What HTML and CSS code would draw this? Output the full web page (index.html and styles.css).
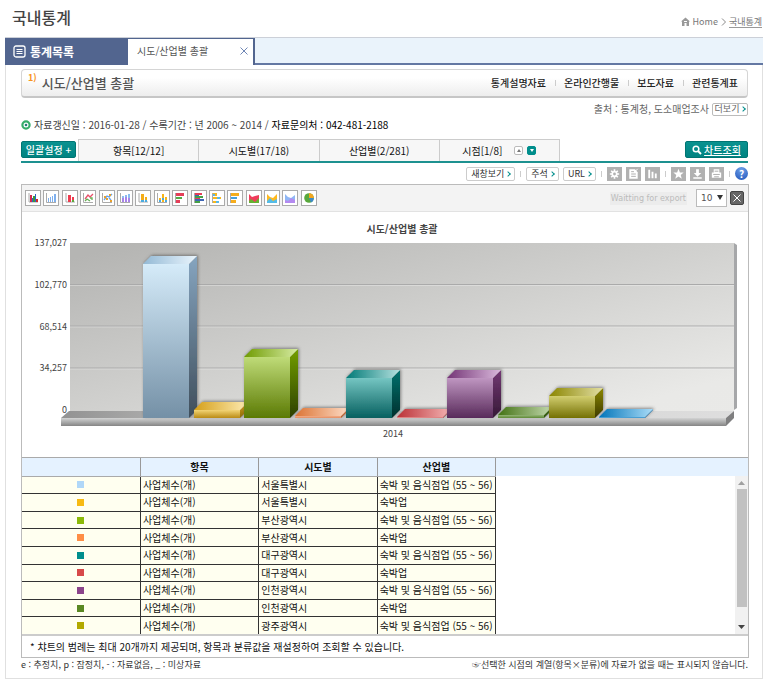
FILE: index.html
```html
<!DOCTYPE html>
<html lang="ko">
<head>
    <meta charset="UTF-8">
    <meta name="viewport" content="width=device-width, initial-scale=1.0">
    <title>국내통계</title>
    <link rel="stylesheet" href="styles.css">
</head>
<body>
    <header class="page-head">
        <h1>국내통계</h1>
        <nav class="crumbs">
            <svg width="9" height="9" viewBox="0 0 9 9"><path d="M4.500 0.500L9 4.500H8V9H5.500V6H3.500V9H1V4.500H0Z" fill="#999"/><path d="M3 4h3v1H3z" fill="#fff"/></svg>
            <a href="#">Home</a>
            <svg width="5" height="8" viewBox="0 0 5 8"><path d="M1 0.500L4.500 4L1 7.500" fill="none" stroke="#888"/></svg>
            <a href="#" class="current">국내통계</a>
        </nav>
    </header>

    <main class="frame">
        <div class="doc-tabs">
            <button class="list-tab">
                <svg width="13" height="13" viewBox="0 0 13 13"><rect x="1" y="1" width="11" height="11" rx="2" fill="none" stroke="#fff" stroke-width="1.300"/><path d="M3.500 4.500h6M3.500 6.500h6M3.500 8.500h6" stroke="#fff"/></svg>
                통계목록
            </button>
            <div class="doc-tab">
                <span>시도/산업별 총괄</span>
                <button class="close-tab" aria-label="닫기"><svg width="8" height="8" viewBox="0 0 8 8"><path d="M0.500 0.500l7 7M7.500 0.500l-7 7" stroke="#6f86b5"/></svg></button>
            </div>
        </div>

        <div class="content">
            <div class="title-card">
                <h2><sup>1)</sup>시도/산업별 총괄</h2>
                <nav class="links">
                    <a href="#">통계설명자료</a>
                    <a href="#">온라인간행물</a>
                    <a href="#">보도자료</a>
                    <a href="#">관련통계표</a>
                </nav>
            </div>

            <div class="source">
                <span>출처 : 통계청, 도소매업조사</span>
                <button class="mini-btn">더보기<i class="chev"></i></button>
            </div>

            <div class="meta">
                <svg width="10" height="10" viewBox="0 0 10 10"><circle cx="5" cy="5" r="3.600" fill="#fff" stroke="#35ad6a" stroke-width="2.200"/><circle cx="5" cy="5" r="1.300" fill="#24787b"/></svg>
                <span>자료갱신일 : 2016-01-28 / 수록기간 : 년 2006 ~ 2014 / <b>자료문의처 : 042-481-2188</b></span>
            </div>

            <div class="filters">
                <button class="teal-btn set-btn">일괄설정 +</button>
                <div class="filter-tabs">
                    <button class="filter">항목[12/12]</button>
                    <button class="filter">시도별(17/18)</button>
                    <button class="filter">산업별(2/281)</button>
                    <div class="filter period">
                        <span>시점[1/8]</span>
                        <button class="step" aria-label="위로"><svg width="4" height="3" viewBox="0 0 4 3"><path d="M2 0l2 3H0z" fill="#777"/></svg></button>
                        <button class="step down" aria-label="아래로"><svg width="4" height="3" viewBox="0 0 4 3"><path d="M0 0h4L2 3z" fill="#fff"/></svg></button>
                    </div>
                </div>
                <button class="teal-btn search-btn">
                    <svg width="10" height="10" viewBox="0 0 10 10"><circle cx="4" cy="4" r="2.800" fill="none" stroke="#fff" stroke-width="1.500"/><path d="M6 6l3 3" stroke="#fff" stroke-width="2"/></svg>
                    <u>차트조회</u>
                </button>
            </div>

            <div class="tools">
                <button class="tool-btn">새창보기<i class="chev"></i></button>
                <i class="sep"></i>
                <div class="tool-group">
                    <button class="tool-btn">주석<i class="chev"></i></button>
                    <button class="tool-btn">URL<i class="chev"></i></button>
                </div>
                <i class="sep"></i>
                <div class="tool-group">
                    <button class="icon-btn" aria-label="설정"><svg viewBox="0 0 15 15"><path d="M7.500 2.500v10M2.500 7.500h10M4 4l7 7M11 4l-7 7" stroke="#fff" stroke-width="1.800"/><circle cx="7.500" cy="7.500" r="3.300" fill="#fff"/><circle cx="7.500" cy="7.500" r="1.500" fill="#b1b1b1"/></svg></button>
                    <button class="icon-btn" aria-label="편집"><svg viewBox="0 0 15 15"><path d="M3 2.500h6l3 3v7H3z" fill="#fff"/><path d="M5 5h3M5 7.500h5M5 10h5" stroke="#aaa"/><path d="M9 5l3-3" stroke="#fff"/></svg></button>
                    <button class="icon-btn" aria-label="차트"><svg viewBox="0 0 15 15"><path d="M3 3h2v9H3zM6.500 5h2v7h-2zM10 7h2v5h-2z" fill="#fff"/></svg></button>
                </div>
                <i class="sep"></i>
                <div class="tool-group">
                    <button class="icon-btn" aria-label="즐겨찾기"><svg viewBox="0 0 15 15"><path d="M7.500 2l1.500 3.800 4 .2-3.100 2.500 1.100 4-3.500-2.300L4 12.500l1.100-4L2 6l4-.2z" fill="#fff"/></svg></button>
                    <button class="icon-btn" aria-label="다운로드"><svg viewBox="0 0 15 15"><path d="M6 2.500h3v4h2.500l-4 4-4-4H6zM3 11h9v1.500H3z" fill="#fff"/></svg></button>
                    <button class="icon-btn" aria-label="인쇄"><svg viewBox="0 0 15 15"><path d="M4.500 2.500h6V6h2v5.500h-10V6h2z" fill="#fff"/><path d="M5.500 4.500h4M4 8h7M5 10.500h5" stroke="#aaa"/></svg></button>
                </div>
                <i class="sep"></i>
                <button class="help" aria-label="도움말">?</button>
            </div>

            <section class="panel">
                <div class="chart-bar">
                    <div class="types">
                        <button aria-label="묶은 막대"><svg viewBox="0 0 12 12"><path d="M2 1v9h9" class="ax"/><path d="M3 3h2v7H3z" fill="#d22b4d"/><path d="M5 6h1v4H5z" fill="#2d62c8"/><path d="M6 4h2v6H6z" fill="#3a9a3a"/><path d="M8 2h1v8H8z" fill="#2d62c8"/><path d="M9 7h2v3H9z" fill="#d22b2b"/></svg></button>
                        <button aria-label="막대"><svg viewBox="0 0 12 12"><path d="M1.500 1v9.500H11" class="ax"/><path d="M3 6h1v4H3zM5 5h1v5H5zM7 4h1v6H7zM9 2h2v8H9z" fill="#7fb0ee"/></svg></button>
                        <button aria-label="두 막대"><svg viewBox="0 0 12 12"><path d="M2 1v9h9" class="ax"/><path d="M4 3h3v7H4z" fill="#ee3b4f"/><path d="M8 5h2v3H8z" fill="#ee3b4f"/><path d="M8 8h2v2H8z" fill="#5aaa3a"/></svg></button>
                        <button aria-label="꺾은선"><svg viewBox="0 0 12 12"><path d="M1.500 1v9.500H11" class="ax"/><path d="M3 7l3-4 2 2 3-3" fill="none" stroke="#e8506a" stroke-width="1.300"/><path d="M3 9l2-2 3 2M8 6h2v2" fill="none" stroke="#65ad55" stroke-width="1.300"/></svg></button>
                        <button aria-label="표식 꺾은선"><svg viewBox="0 0 12 12"><path d="M1.500 1v9.500H11" class="ax"/><path d="M3 8l3-4 2 1 3-3M8 6l2 2" fill="none" stroke="#68a2e8" stroke-width="1.300"/><path d="M3 5h2M5 7h2M9 9h2M8 3h2" fill="none" stroke="#eaa02a" stroke-width="2"/></svg></button>
                        <button aria-label="누적 막대"><svg viewBox="0 0 12 12"><path d="M1.500 1v9.500H11" class="ax"/><path d="M3 6h2v4H3zM6 5h2v5H6zM9 6h2v4H9z" fill="#a883e8"/><path d="M3 4h2v2H3zM6 3h2v2H6zM9 2h2v4H9z" fill="#8abcf0"/></svg></button>
                        <button aria-label="누적 두 막대"><svg viewBox="0 0 12 12"><path d="M2 1v9h9" class="ax"/><path d="M4 2h3v8H4zM8 5h2v3H8z" fill="#f4ad18"/><path d="M4 8h3v2H4zM8 8h2v2H8z" fill="#4aabe0"/></svg></button>
                        <button aria-label="비율 막대"><svg viewBox="0 0 12 12"><path d="M1.500 1v9.500H11" class="ax"/><path d="M3 6h2v4H3zM6 2h2v8H6zM9 5h2v5H9z" fill="#f7b51b"/><path d="M3 8h2v2H3zM6 6h2v2H6zM9 8h2v2H9z" fill="#4aabe0"/></svg></button>
                        <button aria-label="가로 막대"><svg viewBox="0 0 12 12"><path d="M1.500 1v10" class="ax"/><path d="M2 1h8v3H2zM2 8h4v3H2z" fill="#e53f59"/><path d="M2 5h6v2H2z" fill="#55aa45"/></svg></button>
                        <button aria-label="묶은 가로 막대"><svg viewBox="0 0 12 12"><path d="M1.500 1v10" class="ax"/><path d="M2 1h7v2H2zM2 6h5v1H2z" fill="#e53f59"/><path d="M2 3h4v1H2zM2 7h9v2H2z" fill="#3d65b5"/><path d="M2 4h8v2H2zM2 9h5v2H2z" fill="#46a046"/></svg></button>
                        <button aria-label="누적 가로 막대"><svg viewBox="0 0 12 12"><path d="M1.500 1v10" class="ax"/><path d="M2 1h4v3H2zM2 5h8v2H2zM2 9h6v2H2z" fill="#f6b71c"/><path d="M2 2h2v2H2zM6 5h3v2H6zM5 9h3v2H5z" fill="#58b7e8"/></svg></button>
                        <button aria-label="비율 가로 막대"><svg viewBox="0 0 12 12"><path d="M1.500 1v10" class="ax"/><path d="M2 1h8v3H2zM2 8h5v3H2z" fill="#f6ad1c"/><path d="M2 5h6v2H2z" fill="#48a0dc"/></svg></button>
                        <button aria-label="영역"><svg viewBox="0 0 12 12"><path d="M1 2l3 3 3-1 4-1v8H1z" fill="#ef3d5b"/><path d="M1 9l2-2 4 3 4-4v5H1z" fill="#65b331"/></svg></button>
                        <button aria-label="누적 영역"><svg viewBox="0 0 12 12"><path d="M1 2l3 3 3 1 4-4v9H1z" fill="#ffb91e"/><path d="M1 9l3-3 3 3 4-2v4H1z" fill="#55bce8"/></svg></button>
                        <button aria-label="비율 영역"><svg viewBox="0 0 12 12"><path d="M1 2l3 3 3 1 4-3v8H1z" fill="#8fb7f5"/><path d="M1 8l3 1 3-3 4 2v3H1z" fill="#b48af0"/></svg></button>
                        <button aria-label="원형"><svg viewBox="0 0 12 12"><circle cx="6" cy="6" r="4.800" fill="#58a83c"/><path d="M6 6V1.200A4.800 4.800 0 0 1 10.800 6z" fill="#f3a51f"/><path d="M6 6h4.800A4.800 4.800 0 0 1 8 10.400z" fill="#3d8ac8"/></svg></button>
                    </div>
                    <div class="export">
                        <button class="export-btn" disabled>Waitting for export</button>
                        <div class="count">
                            <select aria-label="범례 개수"><option>10</option><option>20</option></select>
                        </div>
                        <button class="close-chart" aria-label="차트 닫기"><svg width="8" height="8" viewBox="0 0 8 8"><path d="M0.500 0.500l7 7M7.500 0.500l-7 7" stroke="#fff"/></svg></button>
                    </div>
                </div>

                <svg class="chart" viewBox="22 212 726 245" role="img" aria-label="시도/산업별 총괄">
                    <defs id="chartDefs">
                        <linearGradient id="wall" gradientUnits="userSpaceOnUse" x1="130" y1="243" x2="250" y2="700">
                            <stop offset="0" stop-color="#b5b5b3"/>
                            <stop offset="0.600" stop-color="#e9e9e7"/>
                            <stop offset="1" stop-color="#ebebe9"/>
                        </linearGradient>
                        <linearGradient id="floor" x1="0" y1="0" x2="1" y2="0">
                            <stop offset="0" stop-color="#929292"/>
                            <stop offset="0.300" stop-color="#c8c8c7"/>
                            <stop offset="1" stop-color="#dedede"/>
                        </linearGradient>
                        <linearGradient id="floorFront" x1="0" y1="0" x2="0" y2="1">
                            <stop offset="0" stop-color="#d2d3d3"/>
                            <stop offset="1" stop-color="#858585"/>
                        </linearGradient>
                        <filter id="shadow" x="-20%" y="-60%" width="140%" height="220%">
                            <feDropShadow dx="1" dy="-1" stdDeviation="1.500" flood-color="#444" flood-opacity="0.600"/>
                        </filter>
                    </defs>
                    <text x="402" y="233" class="chart-title">시도/산업별 총괄</text>
                    <path d="M70 243H734V411H70z" fill="url(#wall)"/>
                    <path d="M734 243l3 2V408l-3 2z" fill="#a6a7a9"/>
                    <path d="M70 284.500H734M70 326H734M70 368H734" stroke="#aaa"/>
                    <path d="M70 285.500H734M70 327H734M70 369H734" stroke="#fff" stroke-opacity="0.300"/>
                    <path d="M61 418L69 411H734L726 418z" fill="url(#floor)"/>
                    <path d="M61 418H726V426H61z" fill="url(#floorFront)"/>
                    <path d="M726 418L734 411V418L726 426z" fill="#7f7f80"/>
                    <g class="axis">
                        <text x="67" y="246">137,027</text>
                        <text x="67" y="288">102,770</text>
                        <text x="67" y="330">68,514</text>
                        <text x="67" y="371">34,257</text>
                        <text x="67" y="413">0</text>
                    </g>
                    <g id="bars"></g>
                    <text x="393" y="437" class="period-label">2014</text>
                </svg>

                <div class="legend">
                    <table>
                        <thead>
                            <tr><th></th><th>항목</th><th>시도별</th><th>산업별</th></tr>
                        </thead>
                        <tbody id="legendBody"></tbody>
                    </table>
                    <div class="scroll">
                        <svg width="7" height="4" viewBox="0 0 7 4"><path d="M3.500 0L7 4H0z" fill="#a0a0a0"/></svg>
                        <div class="thumb"></div>
                        <svg width="7" height="4" viewBox="0 0 7 4"><path d="M0 0h7L3.500 4z" fill="#444"/></svg>
                    </div>
                </div>
                <p class="note">* 챠트의 범례는 최대 20개까지 제공되며, 항목과 분류값을 재설정하여 조회할 수 있습니다.</p>
            </section>

            <div class="footnotes">
                <span>e : 추정치, p : 잠정치, - : 자료없음, _ : 미상자료</span>
                <span>☞선택한 시점의 계열(항목×분류)에 자료가 없을 때는 표시되지 않습니다.</span>
            </div>
        </div>
    </main>

    <script>
        const all = '숙박 및 음식점업 (55 ~ 56)';
        const hotel = '숙박업';

        // front, side, top: gradient start and end colours
        const series = [
            { region: '서울특별시', kind: all, color: '#b0d7f8', height: 154, front: ['#d5ebf9', '#7490a6'], side: ['#86a5c0', '#3f4e5b'], top: ['#93b9d5', '#eaf5fd'] },
            { region: '서울특별시', kind: hotel, color: '#f7ba13', height: 8, front: ['#f2d475', '#ba8b14'], side: ['#d8a41f', '#8c6908'], top: ['#d59f18', '#fdebb4'] },
            { region: '부산광역시', kind: all, color: '#8cba08', height: 61, front: ['#bfdb78', '#5b7a03'], side: ['#739e00', '#2c3f00'], top: ['#6f9b02', '#d6eba2'] },
            { region: '부산광역시', kind: hotel, color: '#ff8e46', height: 2, front: ['#f3ac85', '#e28e64'], side: ['#e0793f', '#b05a2a'], top: ['#dc7435', '#fddcc6'] },
            { region: '대구광역시', kind: all, color: '#008e8c', height: 40, front: ['#75c5c2', '#06605f'], side: ['#00736f', '#002f2d'], top: ['#007a77', '#b5e1df'] },
            { region: '대구광역시', kind: hotel, color: '#d74a4a', height: 1, front: ['#e69a9a', '#d87070'], side: ['#c84444', '#9b2d2d'], top: ['#bb3237', '#f4b4b4'] },
            { region: '인천광역시', kind: all, color: '#8c458c', height: 40, front: ['#bf96c1', '#582a5a'], side: ['#743874', '#351936'], top: ['#743576', '#dab9dc'] },
            { region: '인천광역시', kind: hotel, color: '#5a8823', height: 3, front: ['#94b577', '#5f8a36'], side: ['#4a7a1a', '#2e500c'], top: ['#437214', '#c3d9ae'] },
            { region: '광주광역시', kind: all, color: '#b2a900', height: 22, front: ['#d2ce70', '#747003'], side: ['#8c8700', '#3d3a00'], top: ['#8b8601', '#e2dea3'] },
            { region: '광주광역시', kind: hotel, color: '#1e8ccc', height: 1, front: ['#55a9da', '#3b94cc'], side: ['#2485c0', '#0c659c'], top: ['#0275b9', '#aadcf8'] }
        ];

        const floorY = 418;
        const barWidth = 46;
        const depth = 8;
        const firstX = 143;
        const stepX = 50.700;

        function gradient(id, colors, across) {
            return `<linearGradient id="${id}" x1="0" y1="0" x2="${across ? 1 : 0}" y2="${across ? 0 : 1}">
                <stop offset="0" stop-color="${colors[0]}"/><stop offset="1" stop-color="${colors[1]}"/>
            </linearGradient>`;
        }

        document.getElementById('chartDefs').innerHTML += series.map((s, i) =>
            gradient(`front${i}`, s.front) + gradient(`side${i}`, s.side) + gradient(`top${i}`, s.top, true)).join('');

        document.getElementById('bars').innerHTML = series.map((s, i) => {
            const x = Math.round(firstX + i * stepX);
            const y = floorY - s.height;
            const r = x + barWidth;
            return `<g filter="url(#shadow)">
                <path d="M${r} ${y}l${depth} -${depth}V${floorY - depth}L${r} ${floorY}z" fill="url(#side${i})"/>
                <path d="M${x} ${y}l${depth} -${depth}H${r + depth}L${r} ${y}z" fill="url(#top${i})"/>
                <path d="M${x} ${y}H${r}V${floorY}H${x}z" fill="url(#front${i})"/>
            </g>`;
        }).join('');

        document.getElementById('legendBody').innerHTML = series.slice(0, 9).map(s => `
            <tr>
                <td class="key"><i style="background-color: ${s.color}"></i></td>
                <td>사업체수(개)</td>
                <td>${s.region}</td>
                <td>${s.kind}</td>
            </tr>`).join('');
    </script>
</body>
</html>
```

FILE: styles.css
```css
* {
    box-sizing: border-box;
}

body {
    margin: 0;
    background-color: #fff;
    color: #333;
    font-family: "Noto Sans CJK KR", "Liberation Sans", sans-serif;
    font-size: 10px;
    line-height: 14px;
}

button, select {
    margin: 0;
    padding: 0;
    border: 0;
    background: none;
    color: inherit;
    font: inherit;
    cursor: pointer;
}

a {
    color: inherit;
    text-decoration: none;
}

svg {
    display: block;
}

/* header */
.page-head {
    display: flex;
    justify-content: space-between;
    height: 37px;
    padding: 5px 6px 0 12px;
}

h1 {
    margin: 0;
    font-size: 16px;
    line-height: 24px;
    font-weight: 500;
    color: #444;
}

.crumbs {
    display: flex;
    align-items: center;
    gap: 3px;
    padding-top: 1px;
    font-size: 9px;
    color: #777;
}

.crumbs .current {
    border-bottom: 1px solid #999;
    line-height: 11px;
}

/* frame and document tabs */
.frame {
    margin: 0 5px;
    border: 1px solid #e0e0e0;
    border-top: 0;
}

.doc-tabs {
    display: flex;
    height: 28px;
    margin: 0 -1px;
    background-color: #eaf3fb;
    border-top: 1px solid #ccd0d8;
    border-bottom: 2px solid #6478a3;
}

.list-tab {
    display: flex;
    align-items: center;
    gap: 4px;
    width: 123px;
    height: 27px;
    padding-left: 8px;
    background-color: #52658f;
    color: #fff;
    font-size: 12px;
    font-weight: 700;
}

.doc-tab {
    display: flex;
    align-items: center;
    justify-content: space-between;
    width: 127px;
    height: 27px;
    padding: 0 5px 2px 9px;
    background-color: #fff;
    border-top: 1px solid #52658f;
    border-right: 2px solid #52658f;
    color: #555;
}

.content {
    padding: 4px 14px 6px 15px;
}

.title-card {
    display: flex;
    align-items: center;
    justify-content: space-between;
    height: 29px;
    padding: 0 9px 0 6px;
    border: 1px solid #d5d5d5;
    border-bottom: 2px solid #c6c6c6;
    border-radius: 4px;
    background: linear-gradient(#fff 30%, #ededed);
}

h2 {
    display: flex;
    margin: 0;
    gap: 5px;
    font-size: 13px;
    line-height: 20px;
    font-weight: 500;
    color: #555;
}

h2 sup {
    font-size: 9px;
    line-height: 10px;
    font-weight: 700;
    color: #f7941d;
}

.links {
    display: flex;
    color: #222;
    font-weight: 500;
}

.links a + a {
    margin-left: 9px;
    padding-left: 9px;
    background: linear-gradient(#ccc, #ccc) no-repeat left center / 1px 6px;
}

.source {
    display: flex;
    justify-content: flex-end;
    align-items: center;
    gap: 3px;
    height: 22px;
    color: #666;
}

.mini-btn, .tool-btn {
    display: flex;
    align-items: center;
    justify-content: center;
    gap: 2px;
    border: 1px solid #bbb;
    border-radius: 2px;
    background-color: #fff;
    font-size: 9px;
    white-space: nowrap;
}

.mini-btn {
    width: 36px;
    height: 13px;
}

.chev {
    width: 4px;
    height: 4px;
    border-top: 1px solid #008e8c;
    border-right: 1px solid #008e8c;
    transform: rotate(45deg);
}

.meta {
    display: flex;
    align-items: center;
    gap: 3px;
    height: 10px;
    color: #444;
}

.meta b {
    font-weight: 400;
    color: #000;
}

/* filters */
.filters {
    display: flex;
    align-items: flex-start;
    height: 24px;
    margin-top: 9px;
    border-bottom: 2px solid #1d9190;
}

.teal-btn {
    display: flex;
    align-items: center;
    justify-content: center;
    gap: 2px;
    height: 17px;
    margin-top: 2px;
    border: 1px solid #007573;
    border-radius: 2px;
    background: linear-gradient(#0a9290, #008381);
    color: #fff;
    font-weight: 500;
    white-space: nowrap;
}

.set-btn {
    width: 55px;
    margin-right: 2px;
}

.search-btn {
    width: 63px;
}

.filter-tabs {
    display: flex;
    flex: 1;
    max-width: 482px;
    margin-right: auto;
    height: 22px;
    border: 1px solid #ccc;
    border-bottom: 0;
    background-color: #f7f7f7;
    color: #111;
}

.filter {
    flex: 1;
}

.filter + .filter {
    border-left: 1px solid #ccc;
}

.period {
    display: flex;
    align-items: center;
    justify-content: center;
    gap: 4px;
}

.period span {
    margin-right: 8px;
}

.step {
    display: flex;
    align-items: center;
    justify-content: center;
    width: 9px;
    height: 9px;
    border: 1px solid #bbb;
    border-radius: 2px;
    background-color: #fff;
}

.step.down {
    border-color: #008e8c;
    background-color: #008e8c;
}

/* tools */
.tools {
    display: flex;
    align-items: center;
    justify-content: flex-end;
    gap: 5px;
    height: 21px;
}

.tool-btn {
    height: 14px;
    padding: 0 4px;
    border-color: #ccc;
}

.tool-group {
    display: flex;
    gap: 4px;
}

.sep {
    width: 1px;
    height: 6px;
    background-color: #ccc;
}

.icon-btn {
    width: 15px;
    height: 14px;
    background-color: #b1b1b1;
}

.icon-btn svg {
    width: 15px;
    height: 14px;
}

.help {
    width: 13px;
    height: 13px;
    border-radius: 50%;
    background: radial-gradient(circle at 50% 20%, #6f9fe8, #1f55bb);
    color: #fff;
    font-weight: 700;
    line-height: 13px;
}

/* chart panel */
.panel {
    border: 1px solid #bbb;
    margin-right: -1px;
}

.chart-bar {
    display: flex;
    justify-content: space-between;
    align-items: center;
    height: 27px;
    padding: 0 4px 0 3px;
    background-color: #f3f3f3;
    border-bottom: 1px solid #e2e2e2;
}

.types {
    display: flex;
    justify-content: space-between;
    width: 292px;
}

.types button {
    display: flex;
    align-items: center;
    justify-content: center;
    width: 16px;
    height: 16px;
    border: 1px solid #aaa;
    background-color: #fff;
}

.types svg {
    width: 12px;
    height: 12px;
}

.ax {
    fill: none;
    stroke: #aaa;
}

.export {
    display: flex;
    align-items: center;
    gap: 3px;
}

.export-btn {
    height: 13px;
    margin-right: 6px;
    padding: 0 1px;
    background-color: #ececec;
    color: #bbb;
    font-family: "DejaVu Sans", sans-serif;
    font-size: 8px;
    line-height: 13px;
}

.count {
    position: relative;
}

.count::after {
    content: "";
    position: absolute;
    top: 6px;
    right: 4px;
    border: 3px solid transparent;
    border-top: 5px solid #333;
    border-bottom: 0;
    pointer-events: none;
}

.count select {
    display: block;
    width: 31px;
    height: 18px;
    padding-left: 4px;
    appearance: none;
    border: 1px solid #bbb;
    border-radius: 0;
    background-color: #fff;
    color: #555;
    font-family: "DejaVu Sans", sans-serif;
    font-size: 9px;
}

.close-chart {
    display: flex;
    align-items: center;
    justify-content: center;
    width: 14px;
    height: 14px;
    border: 1px solid #444;
    border-radius: 2px;
    background-color: #666;
}

.chart {
    width: 100%;
    height: auto;
}

.chart text {
    fill: #444;
}

.chart .chart-title {
    font-weight: 700;
    text-anchor: middle;
}

.axis {
    font-size: 9px;
    text-anchor: end;
}

.period-label {
    font-size: 9px;
    text-anchor: middle;
}

/* legend */
.legend {
    display: flex;
    justify-content: space-between;
    height: 177px;
    border-top: 1px solid #aaa;
    background: linear-gradient(#e5f2ff 18px, #fff 18px);
}

table {
    width: 474px;
    height: 176px;
    border-collapse: collapse;
    table-layout: fixed;
    color: #111;
}

th, td {
    padding: 0 2px;
    line-height: 14px;
    overflow: hidden;
    white-space: nowrap;
}

th {
    height: 18px;
    border-right: 1px solid #999;
    border-bottom: 1px solid #aaa;
    font-weight: 700;
}

td {
    border-right: 1px solid #333;
    border-bottom: 1px solid #333;
    background-color: #fffff0;
}

tbody tr:last-child td {
    border-bottom: 0;
}

.key i {
    display: block;
    width: 7px;
    height: 7px;
    margin: 0 auto;
}

.scroll {
    display: flex;
    flex-direction: column;
    align-items: center;
    width: 13px;
    margin-top: 18px;
    padding: 5px 0;
    background-color: #f1f1f1;
}

.thumb {
    width: 10px;
    height: 118px;
    margin: 4px 0 auto;
    background-color: #c1c1c1;
}

.note {
    margin: 0;
    padding: 4px 8px 3px;
    border-top: 2px solid #ccc;
    color: #111;
}

.footnotes {
    display: flex;
    justify-content: space-between;
    font-size: 9px;
    white-space: nowrap;
}
```
